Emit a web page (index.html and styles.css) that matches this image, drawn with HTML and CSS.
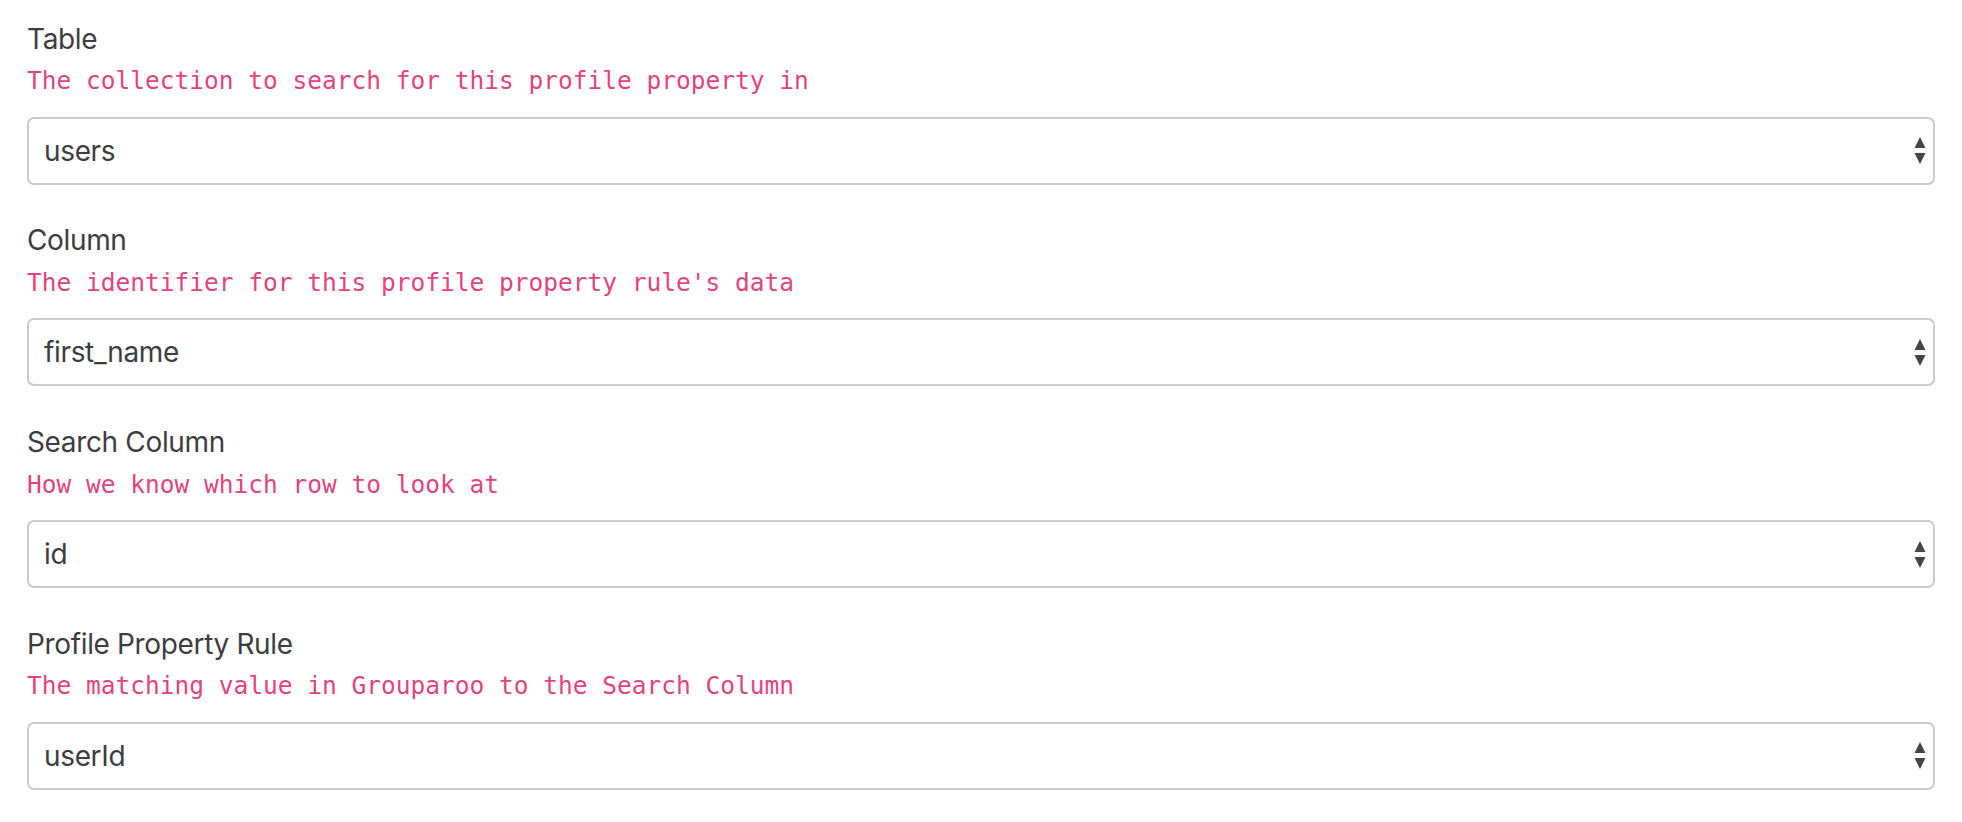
FILE: index.html
```html
<!DOCTYPE html>
<html>
<head>
<meta charset="utf-8">
<link rel="stylesheet" href="styles.css">
</head>
<body>
<form class="form">
  <div class="field">
    <label class="label">Table</label>
    <p class="help"><code>The collection to search for this profile property in</code></p>
    <div class="select"><span class="value">users</span><svg class="arrows" viewBox="0 0 12 27" width="12" height="27"><polygon points="6,0 11.5,11 0.5,11"/><polygon points="0.5,16 11.5,16 6,27"/></svg></div>
  </div>
  <div class="field">
    <label class="label">Column</label>
    <p class="help"><code>The identifier for this profile property rule's data</code></p>
    <div class="select"><span class="value">first_name</span><svg class="arrows" viewBox="0 0 12 27" width="12" height="27"><polygon points="6,0 11.5,11 0.5,11"/><polygon points="0.5,16 11.5,16 6,27"/></svg></div>
  </div>
  <div class="field">
    <label class="label">Search Column</label>
    <p class="help"><code>How we know which row to look at</code></p>
    <div class="select"><span class="value">id</span><svg class="arrows" viewBox="0 0 12 27" width="12" height="27"><polygon points="6,0 11.5,11 0.5,11"/><polygon points="0.5,16 11.5,16 6,27"/></svg></div>
  </div>
  <div class="field">
    <label class="label">Profile Property Rule</label>
    <p class="help"><code>The matching value in Grouparoo to the Search Column</code></p>
    <div class="select"><span class="value">userId</span><svg class="arrows" viewBox="0 0 12 27" width="12" height="27"><polygon points="6,0 11.5,11 0.5,11"/><polygon points="0.5,16 11.5,16 6,27"/></svg></div>
  </div>
</form>
</body>
</html>
```
FILE: styles.css
```css
html, body {
  margin: 0;
  padding: 0;
  background: #ffffff;
}
body {
  font-family: Inter, "Liberation Sans", sans-serif;
  color: #3d3d3f;
}
.form {
  padding: 17.5px 27px 0 27px;
  display: flex;
  flex-direction: column;
  gap: 34.5px;
}
.field {
  display: flex;
  flex-direction: column;
}
.label {
  display: block;
  font-size: 28px;
  line-height: 42px;
  letter-spacing: -0.35px;
}
.help {
  margin: 3.8px 0 17.4px 0;
  font-family: "DejaVu Sans Mono", "Liberation Mono", monospace;
  font-size: 24.5px;
  line-height: 36px;
  height: 36px;
}
.help code {
  font-family: "DejaVu Sans Mono", "Liberation Mono", monospace;
  font-size: 24.5px;
  line-height: 36px;
  color: #e3437f;
}
.select {
  box-sizing: border-box;
  height: 68px;
  border: 2px solid #cbcbcf;
  border-radius: 7px;
  display: flex;
  align-items: center;
  padding: 0 7px 0 15px;
}
.value {
  flex: 1;
  font-size: 28px;
  letter-spacing: -0.35px;
  color: #3d3d3f;
}
.arrows {
  fill: #454545;
  display: block;
}
```
